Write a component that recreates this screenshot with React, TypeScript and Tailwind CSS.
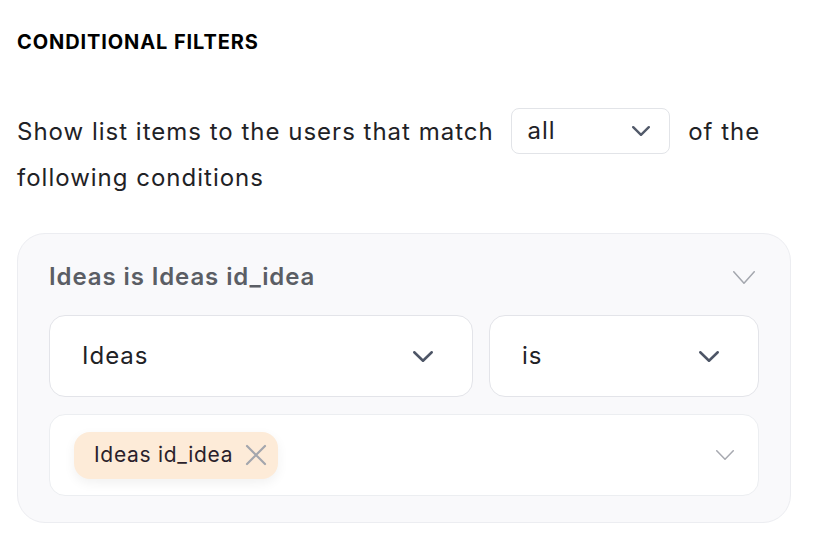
import React from "react";

function Chevron({ className, w = 18, h = 10, sw = 2.5 }: { className?: string; w?: number; h?: number; sw?: number }) {
  return (
    <svg width={w} height={h} viewBox={`0 0 ${w} ${h}`} className={className} fill="none">
      <path d={`M${sw / 2} ${sw / 2} L${w / 2} ${h - sw / 2} L${w - sw / 2} ${sw / 2}`} stroke="currentColor" strokeWidth={sw} strokeLinecap="round" strokeLinejoin="round" />
    </svg>
  );
}

export default function App() {
  return (
    <div className="w-[818px] h-[542px] bg-white overflow-hidden px-[17px] pt-[28px]" style={{ fontFamily: "Inter, 'Noto Sans', sans-serif" }}>
      <h1 className="text-[20px] leading-[28px] font-bold text-black tracking-[0.9px]">CONDITIONAL FILTERS</h1>

      <p className="mt-[53px] text-[24px] leading-[46px] text-[#1f2226] tracking-[1px]">
        Show list items to the users that match{" "}
        <span className="inline-flex align-middle items-center justify-between w-[159px] h-[46px] mx-[10px] -mt-[4px] pl-[15px] pr-[19px] border border-[#e2e4e8] rounded-[8px] bg-white">
          <span className="leading-none">all</span>
          <Chevron className="text-[#525a6a]" w={18} h={10} sw={2.4} />
        </span>
        {" "}of the following conditions
      </p>

      <div className="mt-[32px] w-[774px] rounded-[28px] border border-[#ecedf1] bg-[#f9f9fb] px-[31px] pt-[27px] pb-[26px]">
        <div className="flex items-center justify-between h-[32px]">
          <span className="text-[24px] font-semibold text-[#5b5e65] tracking-[0.9px]">Ideas is Ideas id_idea</span>
          <Chevron className="text-[#a4a7ae] mr-[4px]" w={22} h={13} sw={1.5} />
        </div>

        <div className="mt-[22px] flex gap-[16px]">
          <div className="flex-1 h-[82px] flex items-center justify-between pl-[32px] pr-[39px] bg-white border border-[#e3e4e9] rounded-[16px]">
            <span className="text-[24px] text-[#1f2226] tracking-[1px]">Ideas</span>
            <Chevron className="text-[#4d5566]" w={20} h={11} sw={2.5} />
          </div>
          <div className="w-[270px] h-[82px] flex items-center justify-between pl-[32px] pr-[39px] bg-white border border-[#e3e4e9] rounded-[16px]">
            <span className="text-[24px] text-[#1f2226] tracking-[1px]">is</span>
            <Chevron className="text-[#4d5566]" w={20} h={11} sw={2.5} />
          </div>
        </div>

        <div className="mt-[17px] h-[82px] flex items-center justify-between pl-[24px] pr-[24px] bg-white border border-[#eceef1] rounded-[16px]">
          <span className="h-[47px] flex items-center gap-[12px] pl-[20px] pr-[11px] rounded-[16px] bg-[#fdebd8] shadow-[0_4px_12px_rgba(0,0,0,0.06)]">
            <span className="text-[21px] text-[#2b1f2b] tracking-[0.7px]">Ideas id_idea</span>
            <svg width="22" height="22" viewBox="0 0 22 22" fill="none">
              <path d="M2 2 L20 20 M20 2 L2 20" stroke="#a3a6ad" strokeWidth="2.2" strokeLinecap="round" />
            </svg>
          </span>
          <Chevron className="text-[#a7a9b0]" w={18} h={10} sw={1.5} />
        </div>
      </div>
    </div>
  );
}
